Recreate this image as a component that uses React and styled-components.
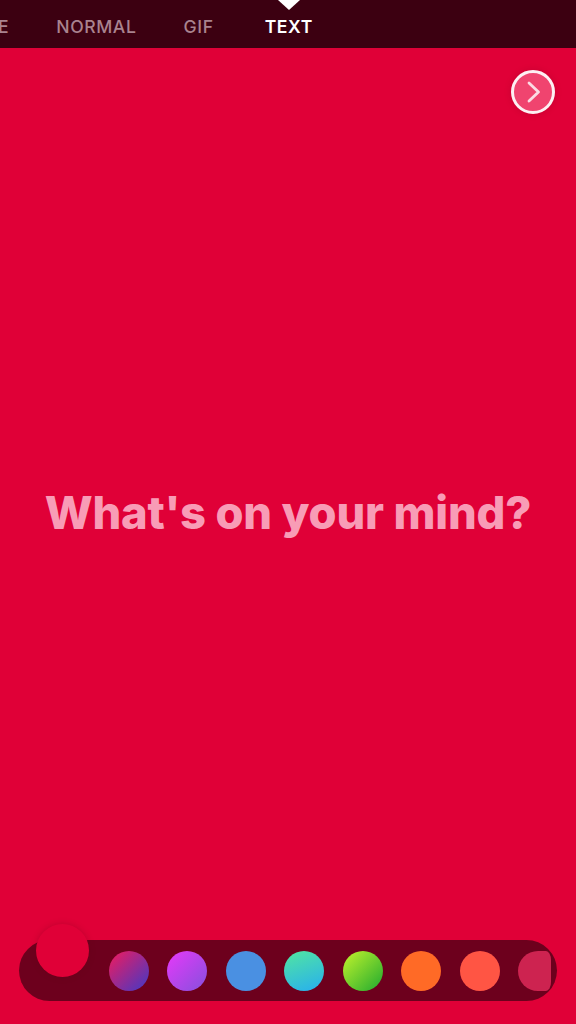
import { createGlobalStyle } from "styled-components";
import styled from "styled-components";

const GlobalStyle = createGlobalStyle`
  html, body {
    margin: 0;
    padding: 0;
    height: 100%;
  }
  body {
    font-family: Inter, "Liberation Sans", sans-serif;
    background: #e00037;
  }
  #root {
    height: 100%;
  }
`

const SWATCHES = [
  "linear-gradient(135deg, #d81f6c 15%, #5a35b8 85%)",
  "linear-gradient(135deg, #d93cf5 15%, #8f4ee0 90%)",
  "#4a90e2",
  "linear-gradient(160deg, #50e3a4 5%, #2bb4e8 90%)",
  "linear-gradient(135deg, #b4ec2c 10%, #2fb12f 90%)",
  "#ff6a26",
  "#ff5544",
]

const App = () => {
  return (
    <Screen>
      <GlobalStyle />
      <TopBar>
        <Tab>E</Tab>
        <Tab>NORMAL</Tab>
        <Tab>GIF</Tab>
        <Tab $active>TEXT</Tab>
      </TopBar>
      <Canvas>
        <NextButton aria-label="Next">
          <svg width="20" height="24" viewBox="0 0 20 24" fill="none">
            <path d="M6 3 L15.5 12 L6 21" stroke="#fbdbe4" strokeWidth="2.8" strokeLinecap="round" strokeLinejoin="round" />
          </svg>
        </NextButton>
        <Prompt>What's on your mind?</Prompt>
      </Canvas>
      <Palette>
        <SelectedColor />
        {SWATCHES.map((background) => (
          <Swatch key={background} style={{ background }} />
        ))}
        <ClippedSwatch />
      </Palette>
    </Screen>
  );
};

const Screen = styled.div`
  width: 576px;
  height: 1024px;
  display: flex;
  flex-direction: column;
  overflow: hidden;
  background: #e00037;
`

const TopBar = styled.nav`
  height: 48px;
  flex-shrink: 0;
  display: flex;
  align-items: center;
  padding: 5px 0 0 0;
  box-sizing: border-box;
  background: #3c0011;
  overflow: hidden;
`

const Tab = styled.span`
  position: relative;
  font-size: 17.6px;
  font-weight: ${(props) => (props.$active ? 600 : 500)};
  letter-spacing: 0.6px;
  line-height: 20px;
  color: ${(props) => (props.$active ? "#ffffff" : "#a9838f")};
  margin-left: 47px;

  &:first-child {
    margin-left: -2px;
  }

  ${(props) => props.$active && `
    margin-left: 51px;

    &::before {
      content: "";
      position: absolute;
      left: 50%;
      top: -17px;
      margin-left: -11px;
      border-left: 11px solid transparent;
      border-right: 11px solid transparent;
      border-top: 10px solid #ffffff;
    }
  `}
`

const Canvas = styled.main`
  position: relative;
  flex: 1;
  display: flex;
  align-items: center;
  justify-content: center;
  padding-top: 36px;
`

const NextButton = styled.button`
  position: absolute;
  top: 22px;
  right: 21px;
  width: 44px;
  height: 44px;
  padding: 0;
  display: flex;
  align-items: center;
  justify-content: center;
  box-sizing: border-box;
  border: 3px solid #fdf0f3;
  border-radius: 50%;
  background: #f0446f;
  box-shadow: 0 0 6px rgba(120, 0, 30, 0.25);
`

const Prompt = styled.h1`
  margin: 0;
  font-size: 45.3px;
  font-weight: 800;
  letter-spacing: -0.2px;
  white-space: nowrap;
  color: #f89cb6;
`

const Palette = styled.div`
  position: relative;
  height: 61px;
  flex-shrink: 0;
  margin: 0 19px 23px;
  padding-left: 89.5px;
  display: flex;
  align-items: center;
  gap: 18.55px;
  box-sizing: border-box;
  border-radius: 31px;
  background: #6d001d;
`

const SelectedColor = styled.div`
  position: absolute;
  left: 17px;
  top: -16px;
  width: 53px;
  height: 53px;
  border-radius: 50%;
  background: #e00037;
  box-shadow: 0 0 6px rgba(90, 0, 25, 0.25);
`

const Swatch = styled.div`
  width: 40px;
  height: 40px;
  flex-shrink: 0;
  border-radius: 50%;
`

const ClippedSwatch = styled.div`
  width: 33px;
  height: 40px;
  flex-shrink: 0;
  border-radius: 20px 5px 5px 20px / 20px 9px 9px 20px;
  background: #cd2350;
`

export default App;
